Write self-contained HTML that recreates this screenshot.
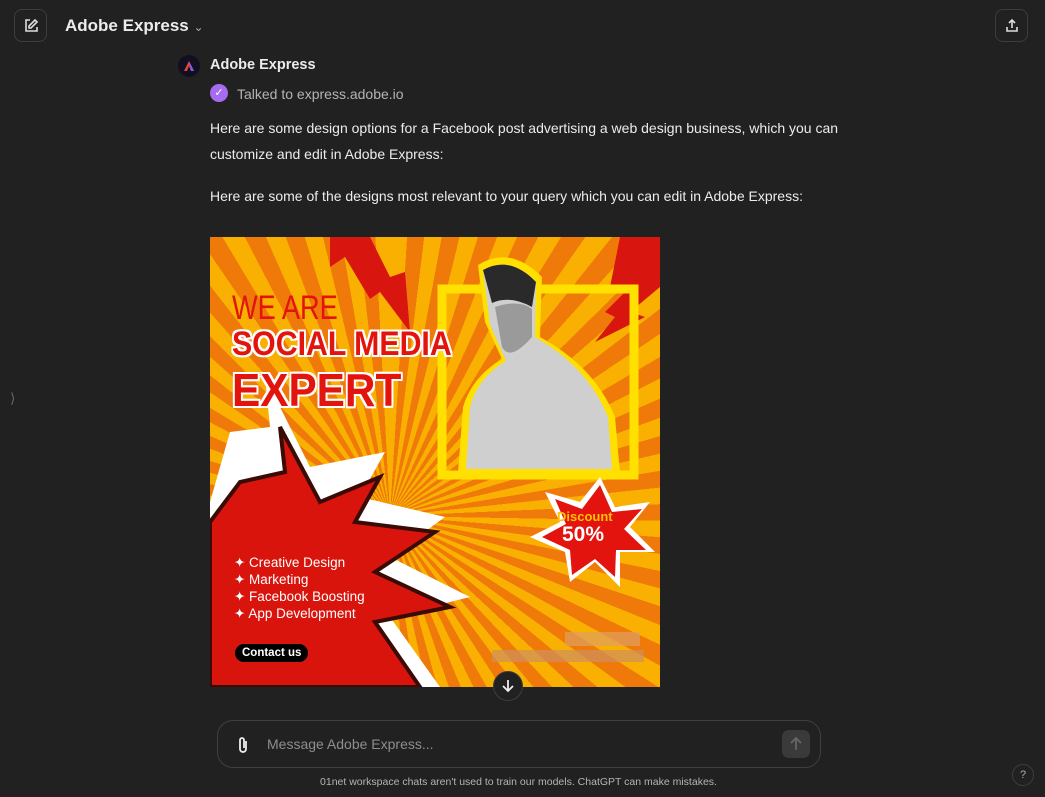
<!DOCTYPE html>
<html><head><meta charset="utf-8"><style>
*{margin:0;padding:0;box-sizing:border-box}
body{width:1045px;height:797px;background:#212121;font-family:"Liberation Sans",sans-serif;color:#ececec;position:relative;overflow:hidden}
.btn{position:absolute;width:33px;height:33px;border:1px solid #3d3d3d;border-radius:8px;display:flex;align-items:center;justify-content:center}
.title{position:absolute;left:65px;top:16px;font-size:17px;font-weight:bold;color:#ececec}
.t{position:absolute;font-size:14px;color:#ececec}
#img{position:absolute;left:210px;top:237px;width:450px;height:450px;overflow:hidden;
background:repeating-conic-gradient(from 0deg at 40% 62%,#f9b000 0deg 3.5deg,#ef7a0a 3.5deg 7deg)}
.input{position:absolute;left:217px;top:720px;width:604px;height:48px;border:1px solid #3f3f3f;border-radius:16px;background:#212121}
.hd{position:absolute;left:22px;color:#e3130e;font-weight:bold;text-shadow:2px 0 #fff,-2px 0 #fff,0 2px #fff,0 -2px #fff,2px 2px #fff,-2px -2px #fff,2px -2px #fff,-2px 2px #fff;transform-origin:left;white-space:nowrap}
</style></head><body>
<div class="btn" style="left:14px;top:9px"><svg width="16" height="16" viewBox="0 0 16 16" fill="none" stroke="#ddd" stroke-width="1.6"><path d="M7 2H3v11h11V9"/><path d="M12 2l2 2-6 6H6V8z"/></svg></div>
<div class="title">Adobe Express <span style="font-size:12px;color:#aaa;font-weight:normal">&#8964;</span></div>
<div class="btn" style="left:995px;top:9px"><svg width="16" height="16" viewBox="0 0 16 16" fill="none" stroke="#ddd" stroke-width="1.6"><path d="M8 10V2M5 5l3-3 3 3M3 9v4h10V9"/></svg></div>
<div style="position:absolute;left:10px;top:390px;color:#666;font-size:14px">⟩</div>

<div style="position:absolute;left:178px;top:55px;width:22px;height:22px;border-radius:50%;background:#101020;display:flex;align-items:center;justify-content:center"><svg width="12" height="12" viewBox="0 0 12 12"><path d="M6 1L1 11h3l2-5 2 5h3z" fill="#e8443a"/><path d="M6 1l5 10H8z" fill="#7b5cf5"/></svg></div>
<div class="t" style="left:210px;top:57px;font-weight:bold;font-size:14.5px">Adobe Express</div>
<div style="position:absolute;left:210px;top:84px;width:18px;height:18px;border-radius:50%;background:#a56cf0;color:#fff;font-size:11px;text-align:center;line-height:18px">✓</div>
<div class="t" style="left:237px;top:86px;color:#b4b4b4">Talked to express.adobe.io</div>
<div class="t" style="left:210px;top:115px;line-height:26px;width:650px">Here are some design options for a Facebook post advertising a web design business, which you can customize and edit in Adobe Express:</div>
<div class="t" style="left:210px;top:188px">Here are some of the designs most relevant to your query which you can edit in Adobe Express:</div>

<div id="img">
<svg width="450" height="450" style="position:absolute;left:0;top:0">
<polygon points="120,0 160,0 180,40 195,35 200,95 170,55 160,62 135,20 120,30" fill="#d8160f"/>
<polygon points="410,0 450,0 450,50 420,75 435,80 385,105 405,80 395,75 415,55 400,50" fill="#d8160f"/>
<rect x="232" y="52" width="192" height="186" fill="none" stroke="#ffe000" stroke-width="9"/>
<path d="M268 28 Q300 8 332 40 L330 100 Q385 130 405 180 L410 236 L248 236 L253 170 Q262 140 292 122 L275 85 Z" fill="#ffe000"/>
<path d="M273 33 Q300 18 326 45 L325 100 Q378 130 398 180 L402 232 L256 232 L260 170 Q268 140 296 124 L280 88 Z" fill="#cfcfcf"/>
<path d="M273 33 Q300 18 326 45 L322 70 Q300 58 282 66 Z" fill="#2a2a2a"/>
<path d="M285 70 Q310 62 322 72 L322 100 Q300 125 292 110 Z" fill="#9a9a9a"/>
<polygon points="0,265 20,195 60,190 55,140 100,230 175,215 150,260 235,280 180,320 260,360 180,380 230,450 0,450" fill="#fff"/>
<polygon points="0,285 30,245 75,235 70,190 110,265 170,240 145,285 225,295 165,335 240,370 165,385 210,450 0,450" fill="#d8140d" stroke="#3a0a05" stroke-width="4"/>
<polygon points="390,240 405,270 440,265 420,290 445,315 410,315 410,350 385,325 360,345 355,315 320,300 350,285 335,255 370,265" fill="#fff"/>
<polygon points="390,248 402,275 432,272 414,292 436,313 406,313 405,340 385,322 362,338 360,313 332,300 356,287 345,262 372,272" fill="#e3130e"/>
<rect x="355" y="395" width="75" height="14" fill="#e0a060" opacity=".7"/>
<rect x="282" y="413" width="152" height="12" fill="#d09060" opacity=".7"/>
</svg>
<div style="position:absolute;left:22px;top:52px;font-size:34px;color:#e3130e;transform:scaleX(.8);transform-origin:left;white-space:nowrap">WE ARE</div>
<div class="hd" style="top:88px;font-size:34px;transform:scaleX(.89)">SOCIAL MEDIA</div>
<div class="hd" style="top:126px;font-size:46px;transform:scaleX(.92)">EXPERT</div>
<div style="position:absolute;left:347px;top:272px;font-size:13px;color:#ffc300;font-weight:bold">Discount</div>
<div style="position:absolute;left:352px;top:286px;font-size:21px;color:#fff;font-weight:bold">50%</div>
<div style="position:absolute;left:24px;top:317px;font-size:13.5px;color:#fff;line-height:17px">✦ Creative Design<br>✦ Marketing<br>✦ Facebook Boosting<br>✦ App Development</div>
<div style="position:absolute;left:25px;top:407px;background:#000;color:#fff;font-size:11.5px;font-weight:bold;padding:3px 7px;border-radius:10px">Contact us</div>
</div>
<div style="position:absolute;left:493px;top:671px;width:30px;height:30px;border-radius:50%;background:#212121;border:1px solid #3d3d3d;display:flex;align-items:center;justify-content:center"><svg width="14" height="14" viewBox="0 0 14 14" fill="none" stroke="#eee" stroke-width="1.8"><path d="M7 1v11M2 7l5 5 5-5"/></svg></div>

<div class="input">
<svg style="position:absolute;left:18px;top:15px" width="14" height="18" viewBox="0 0 14 18" fill="none" stroke="#eee" stroke-width="1.8"><path d="M10 5v8a3 3 0 0 1-6 0V4a2 2 0 0 1 4 0v8"/></svg>
<div style="position:absolute;left:49px;top:15px;font-size:14px;color:#8e8e8e">Message Adobe Express...</div>
<div style="position:absolute;left:564px;top:9px;width:28px;height:28px;border-radius:7px;background:#3a3a3a;display:flex;align-items:center;justify-content:center"><svg width="12" height="14" viewBox="0 0 12 14" fill="none" stroke="#666" stroke-width="1.8"><path d="M6 13V2M1 6l5-5 5 5"/></svg></div>
</div>
<div style="position:absolute;left:0;width:1037px;top:776px;text-align:center;font-size:10.5px;color:#b4b4b4">01net workspace chats aren't used to train our models. ChatGPT can make mistakes.</div>
<div style="position:absolute;left:1012px;top:764px;width:22px;height:22px;border-radius:50%;border:1px solid #3d3d3d;color:#aaa;font-size:11px;text-align:center;line-height:20px">?</div>
</body></html>
